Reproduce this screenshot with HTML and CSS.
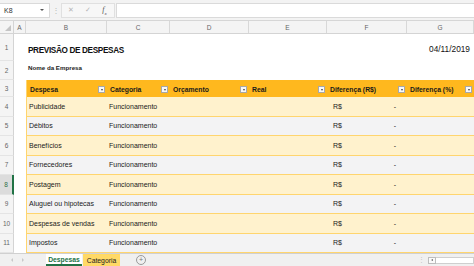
FILE: index.html
```html
<!DOCTYPE html>
<html lang="pt">
  <head>
    <meta charset="UTF-8" />
    <meta name="viewport" content="width=device-width, initial-scale=1.0" />
    <title>Previsão de Despesas</title>
    <link rel="stylesheet" href="styles.css">
  </head>
  <body>
    <div class="app">
      <!-- Formula bar -->
      <div class="formula-bar">
        <div class="name-box">
          <span>K8</span>
          <span class="caret"></span>
        </div>
        <span class="grip">⋮</span>
        <div class="fx-tools">
          <span class="tool">✕</span>
          <span class="tool">✓</span>
          <span class="tool fx">f<sub>x</sub></span>
        </div>
        <div class="formula-input"></div>
      </div>

      <!-- Sheet -->
      <div class="sheet">
        <div class="row col-heads">
          <div class="corner"><span class="corner-tri"></span></div>
          <div class="ch">A</div>
          <div class="ch">B</div>
          <div class="ch">C</div>
          <div class="ch">D</div>
          <div class="ch">E</div>
          <div class="ch">F</div>
          <div class="ch">G</div>
        </div>

        <div class="row r1">
          <div class="rh">1</div>
          <div></div>
          <div class="title">PREVISÃO DE DESPESAS</div>
          <div></div>
          <div class="date">04/11/2019</div>
        </div>

        <div class="row r2">
          <div class="rh">2</div>
          <div></div>
          <div class="company">Nome da Empresa</div>
        </div>

        <div class="row r3">
          <div class="rh">3</div>
          <div></div>
          <div class="th first">Despesa <span class="filter"></span></div>
          <div class="th">Categoria <span class="filter"></span></div>
          <div class="th">Orçamento <span class="filter"></span></div>
          <div class="th">Real <span class="filter"></span></div>
          <div class="th">Diferença (R$) <span class="filter"></span></div>
          <div class="th">Diferença (%) <span class="filter"></span></div>
        </div>

        <div class="row trow band">
          <div class="rh">4</div><div></div>
          <div class="td first">Publicidade</div><div class="td">Funcionamento</div>
          <div class="td"></div><div class="td"></div>
          <div class="td money"><span>R$</span><span>-</span></div><div class="td"></div>
        </div>
        <div class="row trow">
          <div class="rh">5</div><div></div>
          <div class="td first">Débitos</div><div class="td">Funcionamento</div>
          <div class="td"></div><div class="td"></div>
          <div class="td money"><span>R$</span><span>-</span></div><div class="td"></div>
        </div>
        <div class="row trow band">
          <div class="rh">6</div><div></div>
          <div class="td first">Benefícios</div><div class="td">Funcionamento</div>
          <div class="td"></div><div class="td"></div>
          <div class="td money"><span>R$</span><span>-</span></div><div class="td"></div>
        </div>
        <div class="row trow">
          <div class="rh">7</div><div></div>
          <div class="td first">Fornecedores</div><div class="td">Funcionamento</div>
          <div class="td"></div><div class="td"></div>
          <div class="td money"><span>R$</span><span>-</span></div><div class="td"></div>
        </div>
        <div class="row trow band">
          <div class="rh active">8</div><div></div>
          <div class="td first">Postagem</div><div class="td">Funcionamento</div>
          <div class="td"></div><div class="td"></div>
          <div class="td money"><span>R$</span><span>-</span></div><div class="td"></div>
        </div>
        <div class="row trow">
          <div class="rh">9</div><div></div>
          <div class="td first">Aluguel ou hipotecas</div><div class="td">Funcionamento</div>
          <div class="td"></div><div class="td"></div>
          <div class="td money"><span>R$</span><span>-</span></div><div class="td"></div>
        </div>
        <div class="row trow band">
          <div class="rh">10</div><div></div>
          <div class="td first">Despesas de vendas</div><div class="td">Funcionamento</div>
          <div class="td"></div><div class="td"></div>
          <div class="td money"><span>R$</span><span>-</span></div><div class="td"></div>
        </div>
        <div class="row trow">
          <div class="rh">11</div><div></div>
          <div class="td first">Impostos</div><div class="td">Funcionamento</div>
          <div class="td"></div><div class="td"></div>
          <div class="td money"><span>R$</span><span>-</span></div><div class="td"></div>
        </div>
      </div>

      <!-- Sheet tabs -->
      <div class="tab-bar">
        <div class="tab-nav">
          <span class="nav-arrow left"></span>
          <span class="nav-arrow right"></span>
        </div>
        <div class="tab active">Despesas</div>
        <div class="tab yellow">Categoria</div>
        <span class="add-sheet">+</span>
        <span class="spacer"></span>
        <span class="grip small">⋮</span>
        <div class="hscroll">
          <span class="hscroll-btn"></span>
          <span class="hscroll-track"></span>
        </div>
      </div>
    </div>
  </body>
</html>
```

FILE: styles.css
```css
body {
  margin: 0;
  font-family: "Liberation Sans", Arial, sans-serif;
  background: #ffffff;
  overflow: hidden;
}
.app {
  width: 474px;
  height: 266px;
  display: flex;
  flex-direction: column;
  --cols: 14px 12px 81px 63px 79px 78px 80px 67px;
}

/* Formula bar */
.formula-bar {
  height: 21px;
  display: flex;
  align-items: center;
  background: #f3f3f3;
  border-bottom: 1px solid #d6d6d6;
  box-sizing: border-box;
}
.name-box {
  width: 50px;
  height: 15px;
  box-sizing: border-box;
  background: #ffffff;
  border: 1px solid #dadada;
  border-left: none;
  display: flex;
  align-items: center;
  justify-content: space-between;
  padding: 0 5px 0 4px;
  font-size: 7px;
  color: #333;
}
.caret {
  width: 0;
  height: 0;
  border-left: 2px solid transparent;
  border-right: 2px solid transparent;
  border-top: 2px solid #555;
}
.grip {
  width: 11px;
  text-align: center;
  color: #b8b8b8;
  font-size: 8px;
}
.fx-tools {
  height: 15px;
  width: 54px;
  box-sizing: border-box;
  display: flex;
  align-items: center;
  border: 1px solid #e0e0e0;
  background: #f7f7f7;
}
.tool {
  width: 17px;
  text-align: center;
  font-size: 7px;
  color: #b5b5b5;
}
.tool.fx {
  font-family: "Liberation Serif", serif;
  font-style: italic;
  color: #555;
  font-size: 8px;
}
.tool.fx sub {
  font-size: 5px;
}
.formula-input {
  flex: 1;
  height: 15px;
  margin-left: 1px;
  background: #ffffff;
  border: 1px solid #dadada;
  border-right: none;
  box-sizing: border-box;
}

/* Sheet grid */
.sheet {
  display: flex;
  flex-direction: column;
  flex: 1;
}
.row {
  display: grid;
  grid-template-columns: var(--cols);
}
.col-heads {
  height: 13px;
  background: #f4f4f4;
  border-bottom: 1px solid #d4d4d4;
  box-sizing: border-box;
}
.corner {
  position: relative;
  border-right: 1px solid #d4d4d4;
}
.corner-tri {
  position: absolute;
  right: 2px;
  bottom: 2px;
  width: 0;
  height: 0;
  border-left: 6px solid transparent;
  border-bottom: 6px solid #c4c4c4;
}
.ch {
  font-size: 6.5px;
  color: #666;
  display: flex;
  align-items: center;
  justify-content: center;
  border-right: 1px solid #d8d8d8;
}
.rh {
  font-size: 6.5px;
  color: #666;
  background: #f4f4f4;
  border-right: 1px solid #d4d4d4;
  border-bottom: 1px solid #e4e4e4;
  display: flex;
  align-items: center;
  justify-content: center;
  box-sizing: border-box;
}
.rh.active {
  background: #dcdcdc;
  color: #2c6e46;
  border-right: 2px solid #217346;
}

.r1 {
  height: 27px;
}
.r2 {
  height: 19px;
}
.r3 {
  height: 17px;
}
.trow {
  height: 19.5px;
}
.title {
  grid-column: 3 / span 3;
  font-weight: bold;
  font-size: 8.2px;
  letter-spacing: -0.35px;
  color: #111;
  display: flex;
  align-items: center;
  padding-left: 2px;
  padding-top: 6px;
}
.date {
  grid-column: 8;
  font-size: 8.3px;
  color: #111;
  display: flex;
  align-items: center;
  justify-content: flex-end;
  padding-right: 4px;
  padding-top: 2px;
}
.company {
  grid-column: 3 / span 2;
  font-weight: bold;
  font-size: 6.2px;
  color: #222;
  display: flex;
  align-items: center;
  padding-left: 2px;
  padding-bottom: 6px;
}

/* Table */
.th {
  background: #ffb81e;
  font-weight: bold;
  font-size: 6.8px;
  color: #1a1a1a;
  display: flex;
  align-items: center;
  justify-content: space-between;
  padding: 2px 2px 0 3px;
}
.th.first,
.td.first {
  border-left: 1px solid #ffd56e;
}
.filter {
  width: 7px;
  height: 7px;
  box-sizing: border-box;
  background: #f8f8f8;
  border: 1px solid #a8a8a8;
  display: flex;
  align-items: center;
  justify-content: center;
}
.filter::after {
  content: "";
  width: 0;
  height: 0;
  border-left: 1.5px solid transparent;
  border-right: 1.5px solid transparent;
  border-top: 2px solid #444;
}
.td {
  background: #f3f3f4;
  border-bottom: 1px solid #ffd56e;
  box-sizing: border-box;
  font-size: 7px;
  color: #1a1a1a;
  display: flex;
  align-items: center;
  padding-left: 2px;
}
.band .td {
  background: #fff2cd;
}
.td.money {
  justify-content: space-between;
  padding: 0 11px 0 6px;
}

/* Sheet tabs */
.tab-bar {
  height: 13px;
  background: #f0f0f0;
  border-top: 1px solid #d0d0d0;
  box-sizing: border-box;
  display: flex;
  align-items: stretch;
  font-size: 6.8px;
}
.tab-nav {
  width: 46px;
  display: flex;
  align-items: center;
  gap: 9px;
  padding-left: 11px;
  box-sizing: border-box;
}
.nav-arrow {
  width: 0;
  height: 0;
  border-top: 2px solid transparent;
  border-bottom: 2px solid transparent;
}
.nav-arrow.left {
  border-right: 2px solid #c8c8c8;
}
.nav-arrow.right {
  border-left: 2px solid #c8c8c8;
}
.tab {
  display: flex;
  align-items: center;
  justify-content: center;
  padding: 0 5px;
  color: #222;
}
.tab.active {
  width: 36px;
  box-sizing: border-box;
  background: #ffffff;
  color: #217346;
  font-weight: bold;
  border-bottom: 2px solid #217346;
}
.tab.yellow {
  width: 37px;
  box-sizing: border-box;
  background: #ffd966;
  margin-left: 1px;
}
.add-sheet {
  margin-left: 16px;
  width: 8px;
  height: 8px;
  align-self: center;
  border: 1px solid #9a9a9a;
  border-radius: 50%;
  color: #777;
  font-size: 7px;
  line-height: 8px;
  text-align: center;
}
.spacer {
  flex: 1;
}
.grip.small {
  width: auto;
  align-self: center;
  font-size: 7px;
  margin: 0 3px;
  color: #c4c4c4;
}
.hscroll {
  width: 46px;
  display: flex;
  align-items: center;
}
.hscroll-btn {
  width: 8px;
  height: 7px;
  box-sizing: border-box;
  border: 1px solid #bdbdbd;
  background: #fafafa;
  display: flex;
  align-items: center;
  justify-content: center;
}
.hscroll-btn::after {
  content: "";
  width: 0;
  height: 0;
  border-top: 1.5px solid transparent;
  border-bottom: 1.5px solid transparent;
  border-right: 2px solid #666;
}
.hscroll-track {
  flex: 1;
  height: 7px;
  box-sizing: border-box;
  background: #ffffff;
  border: 1px solid #cfcfcf;
  border-left: none;
}
```
